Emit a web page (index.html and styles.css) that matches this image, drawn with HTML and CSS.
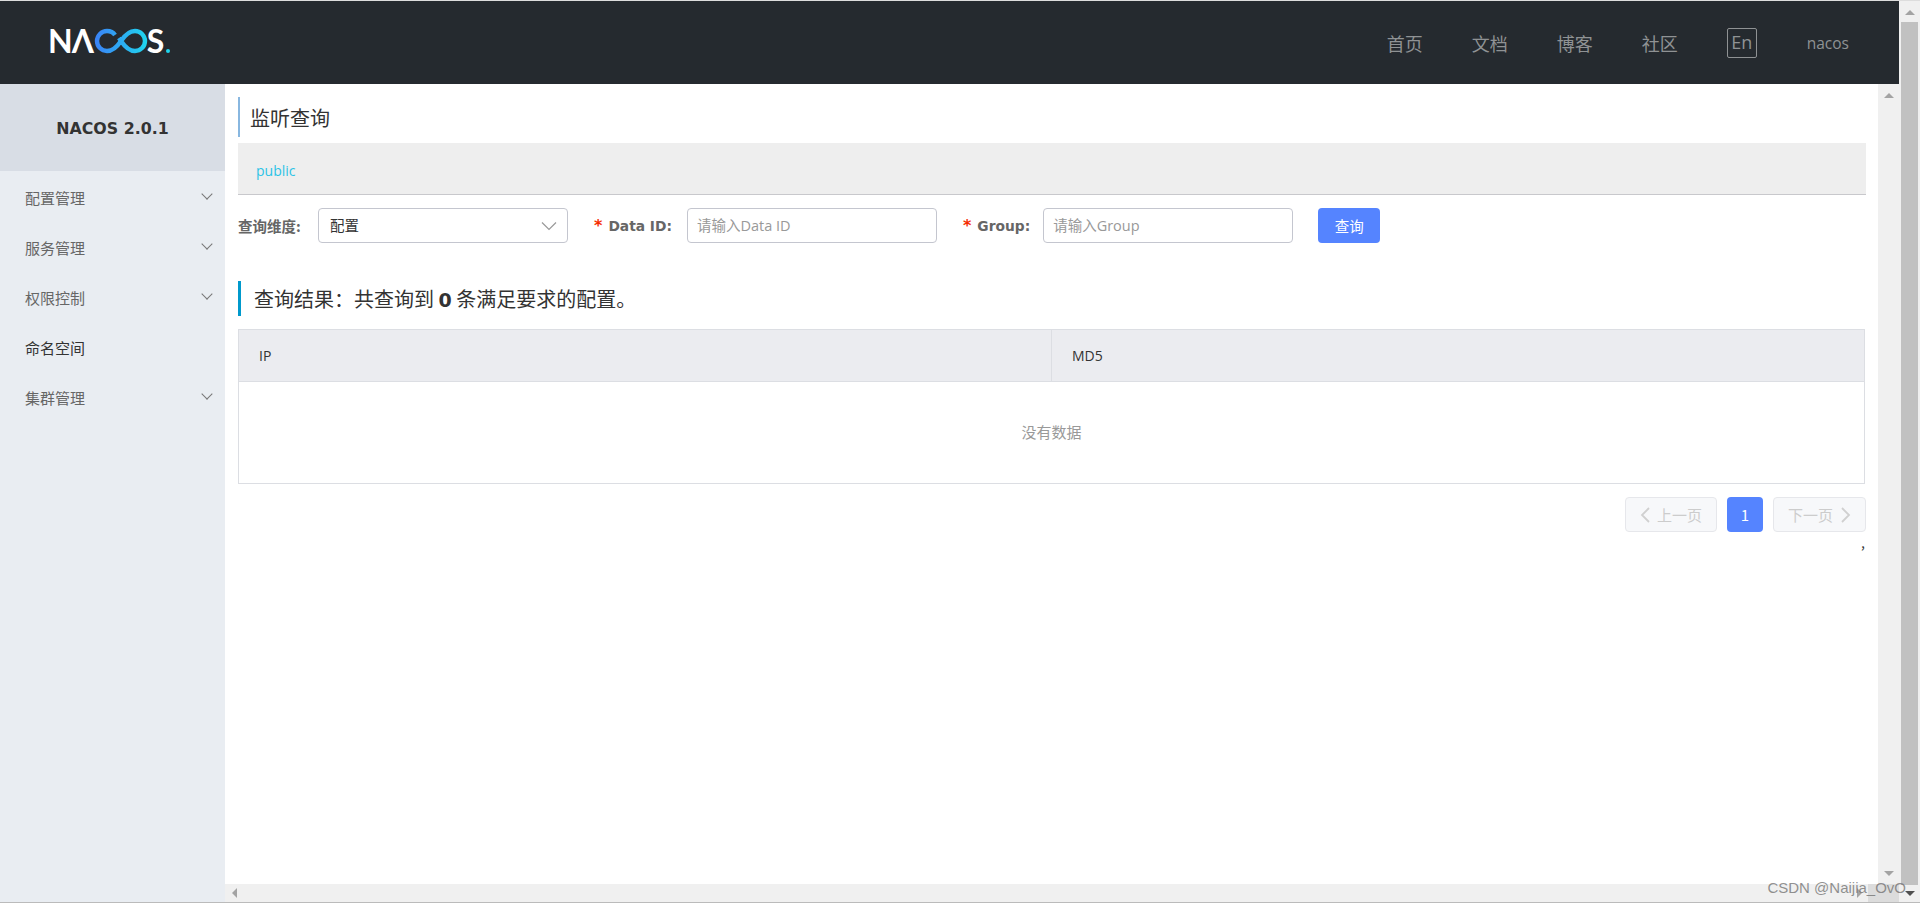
FILE: index.html
```html
<!DOCTYPE html>
<html lang="zh-CN">
<head>
    <meta charset="UTF-8">
    <title>Nacos</title>
    <link rel="stylesheet" href="styles.css">
</head>
<body>
    <div class="window">
        <div class="app">
            <header class="top-bar">
                <div class="logo" aria-label="NACOS">
                    <span>N</span><span class="logo-a">Λ</span>
                    <svg class="logo-loop" width="54" height="28" viewBox="93 27 54 28">
                        <defs>
                            <linearGradient id="loop" gradientUnits="userSpaceOnUse" x1="94" y1="0" x2="146" y2="0">
                                <stop offset="0" stop-color="#3b82f6"/>
                                <stop offset="1" stop-color="#1fd5ee"/>
                            </linearGradient>
                        </defs>
                        <path d="M114 35C112 32 109 31 106 31A10 10 0 0 0 106 51C112 51 116 47 120 41C124 35 128 31 134 31A10 10 0 0 1 134 51C128 51 124 47 120 41L118 38" fill="none" stroke="url(#loop)" stroke-width="4.4"/>
                    </svg>
                    <span class="logo-s">S</span><span class="logo-dot"></span>
                </div>
                <nav class="top-nav">
                    <a>首页</a>
                    <a>文档</a>
                    <a>博客</a>
                    <a>社区</a>
                    <span class="lang">En</span>
                    <span class="user">nacos</span>
                </nav>
            </header>
            <div class="workspace">
                <aside class="sidebar">
                    <div class="version">NACOS 2.0.1</div>
                    <ul class="menu">
                        <li class="has-sub">配置管理</li>
                        <li class="has-sub">服务管理</li>
                        <li class="has-sub">权限控制</li>
                        <li class="active">命名空间</li>
                        <li class="has-sub">集群管理</li>
                    </ul>
                </aside>
                <div class="main">
                    <div class="main-row">
                        <main class="content">
                            <h1 class="page-title">监听查询</h1>
                            <div class="namespace"><a>public</a></div>
                            <form class="search">
                                <label class="search-label first">查询维度:</label>
                                <div class="select"><span class="select-value">配置</span>
                                    <svg width="16" height="10" viewBox="0 0 16 10"><path d="M1 1.5L8 8.5L15 1.5" fill="none" stroke="#999" stroke-width="1.2"/></svg>
                                </div>
                                <label class="search-label required">Data ID:</label>
                                <input class="text-input" type="text" placeholder="请输入Data ID">
                                <label class="search-label required group">Group:</label>
                                <input class="text-input" type="text" placeholder="请输入Group">
                                <button class="btn-primary" type="button">查询</button>
                            </form>
                            <h2 class="result-title">查询结果&#65306;共查询到 <b>0</b> 条满足要求的配置。</h2>
                            <table class="result-table">
                                <thead>
                                    <tr>
                                        <th>IP</th>
                                        <th>MD5</th>
                                    </tr>
                                </thead>
                                <tbody>
                                    <tr>
                                        <td colspan="2">没有数据</td>
                                    </tr>
                                </tbody>
                            </table>
                            <div class="pagination">
                                <button class="page-btn prev" type="button" disabled>
                                    <svg width="10" height="16" viewBox="0 0 10 16"><path d="M9 1L2 8L9 15" fill="none" stroke="#d0d0d0" stroke-width="1.8"/></svg>
                                    上一页
                                </button>
                                <button class="page-num" type="button">1</button>
                                <button class="page-btn next" type="button" disabled>
                                    下一页
                                    <svg width="10" height="16" viewBox="0 0 10 16"><path d="M1 1L8 8L1 15" fill="none" stroke="#d0d0d0" stroke-width="1.8"/></svg>
                                </button>
                            </div>
                            <div class="stray">,</div>
                        </main>
                        <div class="scroll-y">
                            <i class="arrow up"></i>
                            <i class="arrow down"></i>
                        </div>
                    </div>
                    <div class="scroll-x">
                        <i class="arrow left"></i>
                        <i class="arrow right"></i>
                        <div class="corner"></div>
                    </div>
                </div>
            </div>
        </div>
        <div class="scroll-outer">
            <i class="arrow up"></i>
            <div class="thumb"></div>
            <i class="arrow down dark"></i>
        </div>
    </div>
    <div class="watermark">CSDN @Naijia_OvO</div>
</body>
</html>
```

FILE: styles.css
```css
* {
    box-sizing: border-box;
    margin: 0;
    padding: 0;
}
html, body {
    height: 100%;
    overflow: hidden;
}
body {
    font-family: "Noto Sans CJK SC", "Open Sans", sans-serif;
    color: #333;
    background-color: #fff;
}
.window {
    display: flex;
    height: 100%;
    border-top: 1px solid #ddd;
    border-bottom: 1px solid #bbb;
}
.app {
    flex: 1;
    min-width: 0;
    display: flex;
    flex-direction: column;
}

/* top bar */
.top-bar {
    height: 83px;
    flex: none;
    display: flex;
    justify-content: space-between;
    align-items: center;
    background-color: #252a2f;
}
.logo {
    display: flex;
    align-items: center;
    margin: 0 0 4px 48px;
    font-family: "Lato", sans-serif;
    font-size: 32px;
    font-weight: 700;
    line-height: 28px;
    color: #fff;
}
.logo-a {
    margin-left: -1px;
}
.logo-s {
    margin-left: -1px;
}
.logo-dot {
    width: 4px;
    height: 4px;
    margin: 20px 0 0 2px;
    border-radius: 50%;
    background-color: #1fd5ee;
}
.top-nav {
    display: flex;
    align-items: center;
    margin-right: 50px;
    color: #8f9294;
    font-size: 18px;
}
.top-nav a {
    width: 36px;
    margin-right: 49px;
    white-space: nowrap;
}
.lang {
    width: 30px;
    height: 30px;
    margin-right: 50px;
    border: 1px solid #8f9294;
    border-radius: 2px;
    text-align: center;
    line-height: 26px;
    font-family: "Open Sans", sans-serif;
}
.user {
    font-family: "Open Sans", sans-serif;
    font-size: 15.5px;
}

/* sidebar */
.workspace {
    flex: 1;
    min-height: 0;
    display: flex;
}
.sidebar {
    width: 225px;
    flex: none;
    background-color: #e9edf2;
}
.version {
    height: 87px;
    padding-top: 1px;
    display: flex;
    align-items: center;
    justify-content: center;
    background-color: #d8dde5;
    font-family: "DejaVu Sans", sans-serif;
    font-size: 15.8px;
    font-weight: bold;
}
.menu {
    list-style: none;
    padding-top: 2px;
}
.menu li {
    position: relative;
    height: 50px;
    padding-left: 25px;
    line-height: 50px;
    font-size: 15px;
    color: #666;
}
.menu li.active {
    color: #333;
}
.menu li.has-sub::after {
    content: "";
    position: absolute;
    right: 14px;
    top: 17px;
    width: 7px;
    height: 7px;
    border-right: 1px solid #777;
    border-bottom: 1px solid #777;
    transform: rotate(45deg);
}

/* main area */
.main {
    flex: 1;
    min-width: 0;
    display: flex;
    flex-direction: column;
}
.main-row {
    flex: 1;
    min-height: 0;
    display: flex;
}
.content {
    flex: 1;
    min-width: 0;
    padding: 13px 12px 0 13px;
}
.page-title {
    height: 40px;
    padding-left: 10px;
    border-left: 2px solid #88b7e0;
    font-size: 20px;
    font-weight: normal;
    line-height: 42px;
}
.namespace {
    height: 52px;
    margin-top: 6px;
    padding-left: 18px;
    background-color: #eee;
    border-bottom: 1px solid #c8c8cc;
    font-family: "Open Sans", sans-serif;
    font-size: 14px;
    line-height: 55px;
    color: #2cc3e6;
}

/* search form */
.search {
    display: flex;
    align-items: center;
    height: 35px;
    margin-top: 13px;
}
.search-label {
    flex: none;
    margin-right: 15px;
    font-family: "DejaVu Sans", sans-serif;
    font-size: 13.8px;
    font-weight: bold;
    color: #666;
}
.search-label.first {
    width: 80px;
    margin-right: 0;
    font-family: "Noto Sans CJK SC", sans-serif;
    font-size: 14.5px;
}
.search-label.required {
    margin-left: 26px;
}
.search-label.required::before {
    content: "*";
    margin-right: 6px;
    font-size: 16px;
    color: #f52b00;
}
.search-label.group {
    margin-right: 13px;
}
.select, .text-input {
    width: 250px;
    height: 35px;
    flex: none;
    border: 1px solid #c4c6cf;
    border-radius: 4px;
    background-color: #fff;
    font-size: 14.5px;
}
.select {
    display: flex;
    justify-content: space-between;
    align-items: center;
    padding: 0 10px 0 11px;
}
.select-value {
    margin-top: -2px;
}
.text-input {
    padding: 0 9px;
    font-family: "Open Sans", "Noto Sans CJK SC", sans-serif;
}
.text-input::placeholder {
    color: #999;
}
.btn-primary {
    width: 62px;
    height: 35px;
    margin-left: 25px;
    border: none;
    border-radius: 4px;
    background-color: #5584ff;
    color: #fff;
    font-family: "Noto Sans CJK SC", sans-serif;
    font-size: 14.5px;
}

/* results */
.result-title {
    height: 35px;
    margin-top: 38px;
    padding-left: 13px;
    border-left: 3px solid #09c;
    font-size: 20px;
    font-weight: normal;
    line-height: 35px;
}
.result-title b {
    font-family: "DejaVu Sans", sans-serif;
    font-size: 19px;
}
.result-table {
    width: calc(100% - 1px);
    margin-top: 13px;
    border-collapse: collapse;
    table-layout: fixed;
    border: 1px solid #dcdee3;
    font-family: "Open Sans", "Noto Sans CJK SC", sans-serif;
}
.result-table th {
    height: 52px;
    padding-left: 20px;
    border: 1px solid #dcdee3;
    background-color: #ebecf0;
    font-size: 14px;
    font-weight: normal;
    text-align: left;
}
.result-table td {
    height: 102px;
    padding-bottom: 2px;
    text-align: center;
    font-size: 15px;
    color: #999;
}
.pagination {
    display: flex;
    justify-content: flex-end;
    gap: 10px;
    margin-top: 13px;
}
.page-btn, .page-num {
    height: 35px;
    border-radius: 4px;
    font-family: "Noto Sans CJK SC", sans-serif;
    font-size: 15px;
}
.page-btn {
    display: flex;
    align-items: center;
    justify-content: center;
    gap: 7px;
    width: 92px;
    border: 1px solid #e6e7eb;
    background-color: #f7f8fa;
    color: #ccc;
}
.page-btn.next {
    width: 93px;
    gap: 8px;
}
.page-num {
    width: 36px;
    border: none;
    background-color: #5584ff;
    color: #fff;
}
.stray {
    margin-top: 2px;
    text-align: right;
    font-size: 14px;
    line-height: 16px;
    padding-right: 1px;
}

/* scrollbars */
.arrow {
    display: block;
    width: 0;
    height: 0;
    border: 5px solid transparent;
}
.arrow.up {
    border-top: 0;
    border-bottom-color: #a3a3a3;
}
.arrow.down {
    border-bottom: 0;
    border-top-color: #a3a3a3;
}
.arrow.down.dark {
    border-top-color: #505050;
}
.arrow.left {
    border-left: 0;
    border-right-color: #a3a3a3;
}
.arrow.right {
    border-right: 0;
    border-left-color: #a3a3a3;
}
.scroll-y {
    width: 21px;
    flex: none;
    display: flex;
    flex-direction: column;
    align-items: center;
    justify-content: space-between;
    padding: 9px 0 8px;
    background-color: #f0f0f0;
}
.scroll-x {
    height: 18px;
    flex: none;
    display: flex;
    align-items: center;
    padding-left: 7px;
    background-color: #f0f0f0;
}
.scroll-x .right {
    margin-left: auto;
    margin-right: 6px;
}
.corner {
    width: 31px;
    height: 18px;
    background-color: #dcdcdc;
}
.scroll-outer {
    width: 21px;
    flex: none;
    display: flex;
    flex-direction: column;
    align-items: center;
    padding-top: 9px;
    background-color: #f0f0f0;
}
.thumb {
    width: 17px;
    flex: 1;
    margin: 7px 0 6px;
    background-color: #c1c1c1;
}
.scroll-outer .arrow.down {
    margin-bottom: 6px;
}

.watermark {
    position: absolute;
    right: 14px;
    bottom: 7px;
    font-family: "Liberation Sans", sans-serif;
    font-size: 15px;
    color: rgba(110, 110, 110, 0.75);
}
```
